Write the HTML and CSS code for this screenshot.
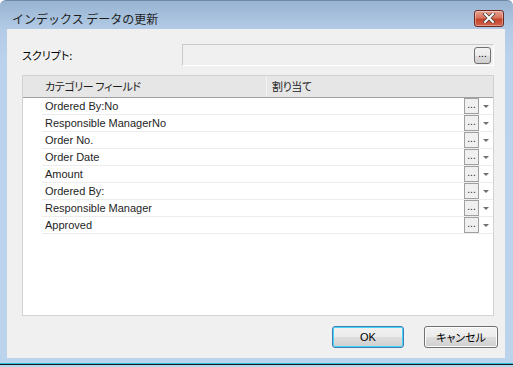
FILE: index.html
```html
<!doctype html>
<html lang="ja">
<head>
	<meta charset="UTF-8">
	<title>インデックス データの更新</title>
	<link rel="stylesheet" href="styles.css">
</head>
<body>
	<div class="window">
		<div class="titlebar">
			<span class="title">インデックス データの更新</span>
			<span class="close-btn">
				<svg width="14" height="10" viewBox="0 0 14 10">
					<path d="M3 1 L11 9 M11 1 L3 9" stroke="#3a3a3a" stroke-width="3.4" stroke-linecap="square"/>
					<path d="M3 1 L11 9 M11 1 L3 9" stroke="#fff" stroke-width="2" stroke-linecap="square"/>
				</svg>
			</span>
		</div>
		<div class="client">
			<div class="script-row">
				<span class="label">スクリプト:</span>
				<div class="script-box">
					<span class="dots-btn">...</span>
				</div>
			</div>
			<div class="grid">
				<div class="grid-head">
					<div class="col-field">カテゴリー フィールド</div>
					<div class="col-assign">割り当て</div>
				</div>
				<ul class="grid-rows">
					<li><span class="name">Ordered By:No</span><span class="cell-btn">...</span><span class="arrow"></span></li>
					<li><span class="name">Responsible ManagerNo</span><span class="cell-btn">...</span><span class="arrow"></span></li>
					<li><span class="name">Order No.</span><span class="cell-btn">...</span><span class="arrow"></span></li>
					<li><span class="name">Order Date</span><span class="cell-btn">...</span><span class="arrow"></span></li>
					<li><span class="name">Amount</span><span class="cell-btn">...</span><span class="arrow"></span></li>
					<li><span class="name">Ordered By:</span><span class="cell-btn">...</span><span class="arrow"></span></li>
					<li><span class="name">Responsible Manager</span><span class="cell-btn">...</span><span class="arrow"></span></li>
					<li><span class="name">Approved</span><span class="cell-btn">...</span><span class="arrow"></span></li>
				</ul>
			</div>
			<div class="buttons">
				<span class="btn btn-default">OK</span>
				<span class="btn">キャンセル</span>
			</div>
		</div>
		<div class="bottom-edge"></div>
	</div>
</body>
</html>
```

FILE: styles.css
```css
*{
	margin: 0;
	padding: 0;
	box-sizing: border-box;
}
body{
	width: 513px;
	height: 367px;
	overflow: hidden;
	background: #fff;
	font-family: "Liberation Sans", "Noto Sans CJK JP", sans-serif;
	font-size: 12px;
	color: #000;
}
.window{
	width: 513px;
	height: 367px;
	background: linear-gradient(#98b4d2 0, #b3cbe6 29px, #bad2ec 60px, #bcd3ec 100%);
	border-radius: 6px 6px 0 0;
	border-top: 1px solid #6f8aa8;
	display: flex;
	flex-direction: column;
}
.titlebar{
	height: 28px;
	display: flex;
	align-items: center;
	padding: 6px 9px 0 12px;
}
.title{
	flex: 1;
	font-family: "Noto Sans CJK JP", sans-serif;
	font-size: 12px;
	color: #1e1e1e;
}
.close-btn{
	width: 30px;
	height: 17px;
	border: 1px solid #6b2a22;
	border-radius: 3px;
	background: linear-gradient(#e8a393 0, #d8735c 45%, #c4432b 55%, #d2654c 100%);
	display: flex;
	align-items: center;
	justify-content: center;
	box-shadow: inset 0 0 0 1px rgba(255,255,255,0.35);
}
.client{
	margin: 0 8px 0 7px;
	height: 329px;
	background: #f0f0f0;
	padding: 15px 11px 0 15px;
	display: flex;
	flex-direction: column;
}
.script-row{
	display: flex;
	align-items: center;
	height: 22px;
}
.label{
	flex: 1;
	font-family: "Noto Sans CJK JP", sans-serif;
	font-size: 11px;
	font-feature-settings: "palt";
}
.script-box{
	width: 312px;
	height: 22px;
	border: 1px solid #c9c9c9;
	border-bottom-color: #fff;
	border-right-color: #fff;
	background: #f0f0f0;
	display: flex;
	justify-content: flex-end;
	align-items: center;
	padding-right: 2px;
}
.dots-btn{
	width: 17px;
	height: 17px;
	border: 1px solid #707070;
	border-radius: 3px;
	background: linear-gradient(#f2f2f2 0, #ebebeb 50%, #dddddd 51%, #cfcfcf 100%);
	font-size: 10px;
	line-height: 12px;
	text-align: center;
}
.grid{
	margin-top: 9px;
	height: 241px;
	border: 1px solid #d2d2d2;
	background: #fff;
}
.grid-head{
	height: 22px;
	display: flex;
	background: #e6e6e6;
	border-bottom: 1px solid #a0a0a0;
	font-family: "Noto Sans CJK JP", sans-serif;
	font-size: 11px;
	font-feature-settings: "palt";
	letter-spacing: -0.4px;
	color: #1e1e1e;
}
.col-field{
	width: 244px;
	padding-left: 22px;
	line-height: 21px;
	border-right: 1px solid #f4f4f4;
}
.col-assign{
	padding-left: 5px;
	line-height: 21px;
}
.grid-rows{
	list-style: none;
	padding-left: 19px;
}
.grid-rows > li{
	height: 17px;
	border-bottom: 1px solid #ececec;
	display: flex;
	align-items: center;
	padding-left: 3px;
	color: #1e1e1e;
}
.name{
	flex: 1;
	font-size: 11px;
}
.cell-btn{
	width: 15px;
	height: 16px;
	border: 1px solid #a0a0a0;
	background: #f0f0f0;
	font-size: 10px;
	line-height: 11px;
	text-align: center;
}
.arrow{
	width: 14px;
	display: flex;
	justify-content: center;
}
.arrow::before{
	content: "";
	border-top: 3px solid #707070;
	border-left: 3px solid transparent;
	border-right: 3px solid transparent;
}
.buttons{
	display: flex;
	justify-content: flex-end;
	gap: 20px;
	margin-top: 10px;
	margin-right: -4px;
}
.btn{
	width: 74px;
	height: 22px;
	border: 1px solid #707070;
	border-radius: 3px;
	background: linear-gradient(#f2f2f2 0, #ebebeb 50%, #dddddd 51%, #cfcfcf 100%);
	box-shadow: inset 0 0 0 1px #fcfcfc;
	font-family: "Noto Sans CJK JP", sans-serif;
	font-size: 11px;
	font-feature-settings: "palt";
	text-align: center;
	line-height: 20px;
}
.btn-default{
	width: 72px;
	border-color: #3c7fb1;
	box-shadow: inset 0 0 0 1px #48d4f8;
	font-family: "Liberation Sans", sans-serif;
}
.bottom-edge{
	margin-top: 5px;
	height: 2px;
	background: #29c2e4;
	border-bottom: 1px solid #1a1a1a;
}
```
